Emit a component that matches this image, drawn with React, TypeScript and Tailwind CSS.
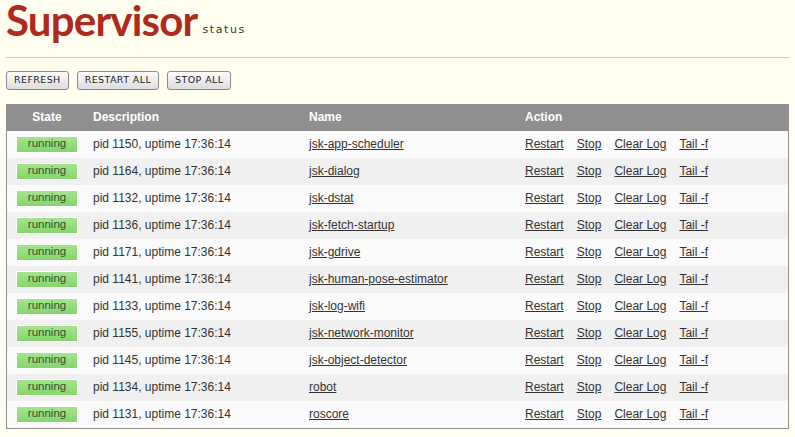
import React from "react";

const rows: [string, string][] = [
  ["1150", "jsk-app-scheduler"],
  ["1164", "jsk-dialog"],
  ["1132", "jsk-dstat"],
  ["1136", "jsk-fetch-startup"],
  ["1171", "jsk-gdrive"],
  ["1141", "jsk-human-pose-estimator"],
  ["1133", "jsk-log-wifi"],
  ["1155", "jsk-network-monitor"],
  ["1145", "jsk-object-detector"],
  ["1134", "robot"],
  ["1131", "roscore"],
];

function Btn({ label }: { label: string }) {
  return (
    <button className="h-[19px] px-[7px] rounded-[3px] border border-[#8a8a8a] bg-gradient-to-b from-[#fdfdfd] to-[#dcdcdc] text-[9.5px] tracking-[0.4px] text-[#222] leading-none [font-family:'DejaVu_Sans',sans-serif]">
      {label}
    </button>
  );
}

export default function App() {
  return (
    <div className="w-[795px] h-[437px] bg-[#fffeef] overflow-hidden [font-family:'Liberation_Sans',Arial,sans-serif] text-[12px] text-[#333]">
      <div className="px-[6px]">
        <div className="flex items-baseline">
          <span className="text-[42px] leading-[40px] font-bold text-[#ae2a1d] tracking-[-0.8px] [font-family:Lato,sans-serif]">
            Supervisor
          </span>
          <span className="relative -top-[3px] ml-[5px] text-[11px] tracking-[1.6px] text-[#333] [font-family:'DejaVu_Sans',sans-serif]">
            status
          </span>
        </div>
        <div className="mt-[15px] h-px bg-[#c8c8c8]" />
        <div className="flex gap-[8px] mt-[13px]">
          <Btn label="REFRESH" />
          <Btn label="RESTART ALL" />
          <Btn label="STOP ALL" />
        </div>
        <div className="mt-[14px] w-[783px] border-r border-b border-l border-[#8f8f8f]">
          <div className="grid grid-cols-[80px_216px_216px_1fr] h-[27px] items-center bg-[#8f8f8f] text-white font-bold">
            <div className="text-center">State</div>
            <div className="pl-[6px]">Description</div>
            <div className="pl-[6px]">Name</div>
            <div className="pl-[6px]">Action</div>
          </div>
          {rows.map(([pid, name], i) => (
            <div
              key={name}
              className={`grid grid-cols-[80px_216px_216px_1fr] h-[27px] items-center ${
                i % 2 === 0 ? "bg-[#fafafa]" : "bg-[#f0f0f0]"
              }`}
            >
              <div className="flex justify-center">
                <span className="w-[62px] h-[17px] flex items-center justify-center border border-white bg-gradient-to-b from-[#a4e58e] to-[#85d56d] text-[#34502c] text-[11.5px]">
                  running
                </span>
              </div>
              <div className="pl-[6px]">pid {pid}, uptime 17:36:14</div>
              <div className="pl-[6px]">
                <a className="underline text-[#333]">{name}</a>
              </div>
              <div className="pl-[6px] flex">
                <a className="underline mr-[13px]">Restart</a>
                <a className="underline mr-[13px]">Stop</a>
                <a className="underline mr-[13px]">Clear Log</a>
                <a className="underline">Tail -f</a>
              </div>
            </div>
          ))}
        </div>
      </div>
    </div>
  );
}
